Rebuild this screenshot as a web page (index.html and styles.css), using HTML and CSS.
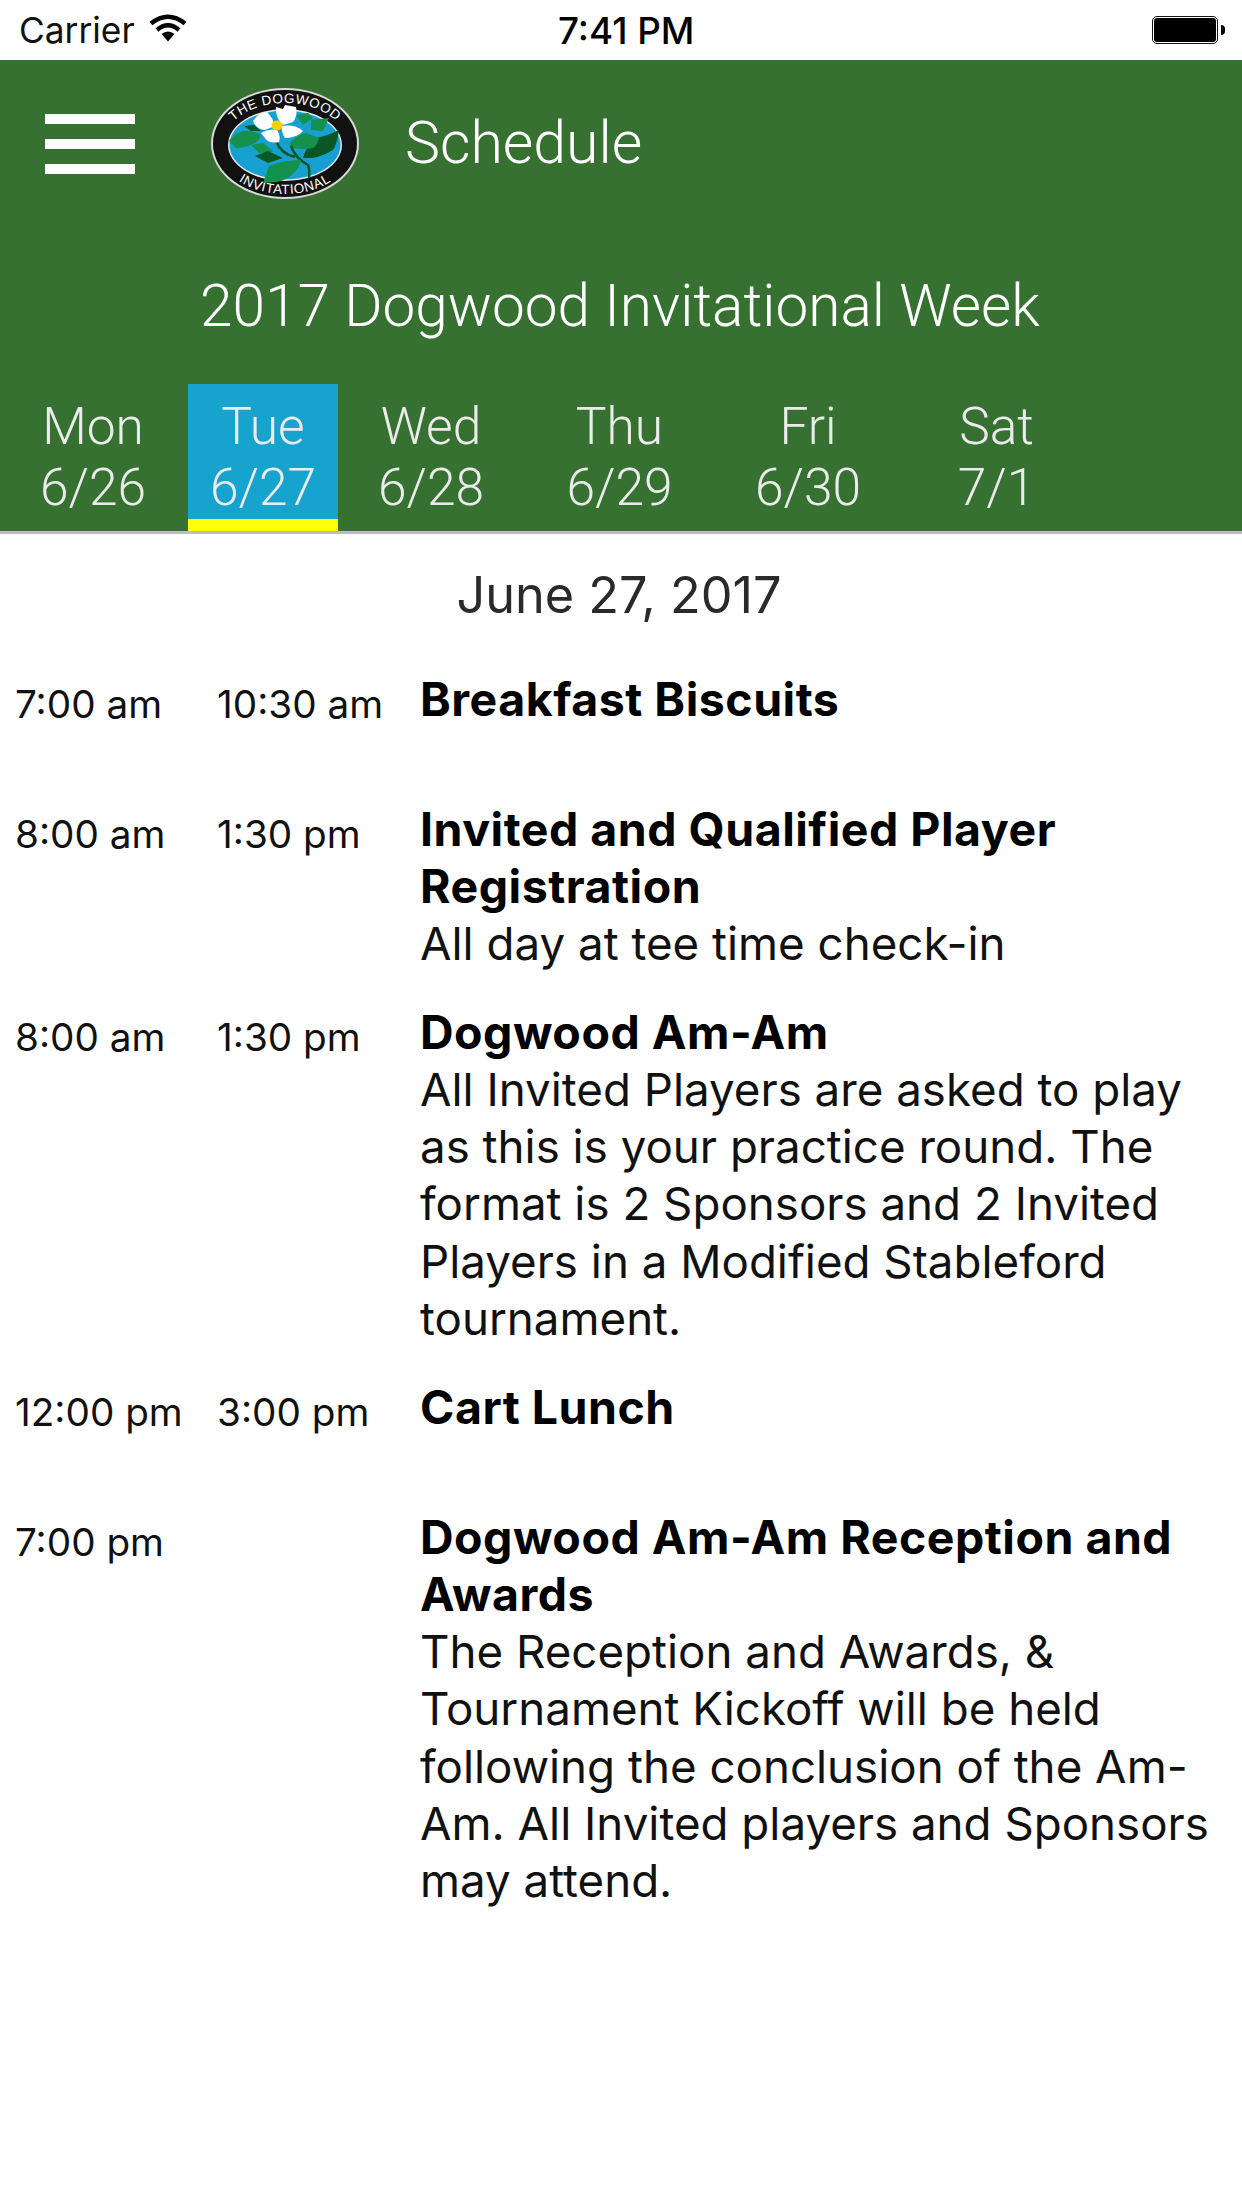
FILE: index.html
```html
<!DOCTYPE html>
<html lang="en">
<head>
<meta charset="utf-8">
<title>Schedule</title>
<link rel="stylesheet" href="styles.css">
</head>
<body>
<div class="status">
  <div class="status-left">
    <span>Carrier</span>
    <svg class="wifi" viewBox="0 0 38 28" width="38" height="28"><path d="M19 27.500 L12.500 20 Q19 15 25.500 20Z" fill="#000"/><path d="M8 16 Q19 6.500 30 16" fill="none" stroke="#000" stroke-width="4.500"/><path d="M2 9.500 Q19 -4 36 9.500" fill="none" stroke="#000" stroke-width="4.500"/></svg>
  </div>
  <div class="status-time">7:41 PM</div>
  <div class="battery"><div class="battery-body"></div><div class="battery-nub"></div></div>
</div>
<header class="head">
  <div class="topbar">
    <div class="burger"><span></span><span></span><span></span></div>
    <svg class="logo" viewBox="0 0 148 111" width="148" height="111">
      <defs>
        <path id="arcTop" d="M10 60 A64 45 0 0 1 138 60"/>
        <path id="arcBot" d="M5 56 A69 50 0 0 0 143 56"/>
      </defs>
      <ellipse cx="74" cy="55.500" rx="74" ry="55.500" fill="#d9d9d9"/>
      <ellipse cx="74" cy="55.500" rx="72" ry="53.500" fill="#111"/>
      <ellipse cx="74" cy="57" rx="57" ry="36" fill="#e8e8e8"/>
      <ellipse cx="74" cy="57" rx="55.500" ry="34.500" fill="#17a0cf"/>
      <text class="logo-text"><textPath href="#arcTop" startOffset="50%" text-anchor="middle">THE DOGWOOD</textPath></text>
      <text class="logo-text"><textPath href="#arcBot" startOffset="50%" text-anchor="middle">INVITATIONAL</textPath></text>
      <path d="M33 38 L43 37 L50 43 L40 43Z" fill="#0b5626"/>
      <path d="M85 27 L97 25 L102 30 L92 37Z" fill="#14914c"/>
      <path d="M100 32 L118 30 L112 43 L100 42Z" fill="#14914c"/>
      <path d="M92 70 Q96 56 105 50 Q116 48 128 42 Q126 56 122 62 Q112 68 102 70Z" fill="#0b5626"/>
      <path d="M18 53 Q24 45 32 43 Q42 42 50 47 L47 53 Q36 60 25 60Z" fill="#14914c"/>
      <path d="M78 57 Q84 47 95 45 L108 50 Q106 58 102 60 Q92 62 82 60Z" fill="#14914c"/>
      <path d="M40 57 L52 55 L63 64 L48 65Z" fill="#14914c"/>
      <path d="M44 68 L57 63 L72 70 L57 75Z" fill="#0b5626"/>
      <path d="M65 53 Q70 66 84 69 M80 58 Q84 70 97 77 Q99 82 98 90" fill="none" stroke="#0b5626" stroke-width="2.500"/>
      <path d="M52 95 L58 78 Q72 72 90 72 Q88 80 83 85 Q74 93 65 94Z" fill="#14914c"/>
      <path d="M65 19 L72 21 L74 17 L85 19 Q87 28 82 34 L72 37 Q64 30 65 19Z" fill="#fff"/>
      <path d="M42 33 Q48 24 56 24 Q62 30 64 38 L54 42 Q46 42 42 33Z" fill="#fff"/>
      <path d="M50 45 Q58 40 66 42 Q70 48 68 54 Q58 56 54 50Z" fill="#fff"/>
      <path d="M71 38 Q84 36 92 43 Q86 50 74 50 Q70 44 71 38Z" fill="#fff"/>
      <ellipse cx="66" cy="37.500" rx="5.500" ry="5" fill="#f7d000"/>
    </svg>
    <div class="page-title">Schedule</div>
  </div>
  <div class="week">2017 Dogwood Invitational Week</div>
  <nav class="tabs">
    <div class="tab tab-mon"><span>Mon</span><span>6/26</span></div>
    <div class="tab tab-tue active"><span>Tue</span><span>6/27</span></div>
    <div class="tab tab-wed"><span>Wed</span><span>6/28</span></div>
    <div class="tab tab-rest"><span>Thu</span><span>6/29</span></div>
    <div class="tab tab-rest"><span>Fri</span><span>6/30</span></div>
    <div class="tab tab-rest"><span>Sat</span><span>7/1</span></div>
  </nav>
</header>
<main class="content">
  <h1 class="date">June 27, 2017</h1>
  <section class="row row-short">
    <div class="time">7:00 am</div><div class="time">10:30 am</div>
    <div class="event"><div class="name">Breakfast Biscuits</div></div>
  </section>
  <section class="row">
    <div class="time">8:00 am</div><div class="time">1:30 pm</div>
    <div class="event"><div class="name">Invited and Qualified Player Registration</div><div>All day at tee time check-in</div></div>
  </section>
  <section class="row">
    <div class="time">8:00 am</div><div class="time">1:30 pm</div>
    <div class="event"><div class="name">Dogwood Am-Am</div><div>All Invited Players are asked to play as this is your practice round. The format is 2 Sponsors and 2 Invited Players in a Modified Stableford tournament.</div></div>
  </section>
  <section class="row row-short">
    <div class="time">12:00 pm</div><div class="time">3:00 pm</div>
    <div class="event"><div class="name">Cart Lunch</div></div>
  </section>
  <section class="row">
    <div class="time">7:00 pm</div><div class="time"></div>
    <div class="event"><div class="name">Dogwood Am-Am Reception and Awards</div><div>The Reception and Awards, &amp; Tournament Kickoff will be held following the conclusion of the Am-Am. All Invited players and Sponsors may attend.</div></div>
  </section>
</main>
</body>
</html>
```
FILE: styles.css
```css
* { box-sizing: border-box; }
html, body { margin: 0; padding: 0; background: #fff; }
body { width: 1242px; height: 2208px; overflow: hidden; font-family: Inter, "Liberation Sans", sans-serif; color: #000; }
.status { height: 60px; display: flex; align-items: center; position: relative; padding-left: 19px; }
.status-left { display: flex; align-items: center; gap: 14px; color: #111; font-size: 35.300px; }
.wifi { margin-top: -4px; }
.status-time { position: absolute; left: 558px; top: 11px; font-weight: 500; line-height: 40px; font-size: 36.800px; }
.battery { position: absolute; left: 1152px; top: 16px; display: flex; align-items: center; }
.battery-body { width: 66px; height: 28px; background: #000; background-clip: content-box; padding: 1px; border: 1px solid #111; border-radius: 5px; }
.battery-nub { width: 4px; height: 10px; background: #000; border-radius: 0 5px 5px 0; margin-left: 3px; }
.head { background: #367132; height: 474px; border-bottom: 3px solid #bdbdbd; color: #fff; display: flex; flex-direction: column; }
.topbar { display: flex; align-items: flex-start; height: 215px; }
.burger { width: 90px; margin: 54px 0 0 45px; display: flex; flex-direction: column; gap: 15px; }
.burger span { display: block; height: 10px; background: #fff; }
.logo { margin: 28px 0 0 76px; }
.logo-text { font-family: "Liberation Sans", sans-serif; font-size: 13.500px; fill: #fff; letter-spacing: .6px; }
.page-title { font-family: Roboto, "Liberation Sans", sans-serif; font-weight: 300; font-size: 59px; margin: 52px 0 0 46px; line-height: 62px; }
.week { font-family: Roboto, "Liberation Sans", sans-serif; font-weight: 300; text-align: center; font-size: 58.500px; line-height: 62px; margin-left: -2px; }
.tabs { display: flex; margin-top: 47px; }
.tab { width: 150px; height: 147px; display: flex; flex-direction: column; align-items: center; padding-top: 12px; font-family: Roboto, "Liberation Sans", sans-serif; font-weight: 300; font-size: 51.500px; line-height: 61px; color: #ebebeb; }
.tab-mon { margin-left: 18px; }
.tab-tue { margin-left: 20px; }
.tab-wed { margin-left: 18px; }
.tab-rest { margin-left: 38.500px; }
.active { background: #16a3ce; border-bottom: 12px solid #ffff0a; }
.content { padding: 0 20px 0 15px; }
.date { margin: 33px 0 0 -15px; text-align: center; font-weight: 400; font-size: 50.400px; line-height: 56px; color: #2a2a2a; padding: 0 4px 16px 0; width: 1242px; }
.row { display: grid; grid-template-columns: 202px 203px 1fr; margin-top: 31.500px; }
.row-short { min-height: 98.700px; }
.time { font-size: 38.700px; line-height: 46px; padding-top: 10px; color: #111; }
.event { font-size: 45.700px; line-height: 57.200px; color: #111; }
.name { font-weight: 700; color: #000; font-size: 46.500px; letter-spacing: .5px; }
```
